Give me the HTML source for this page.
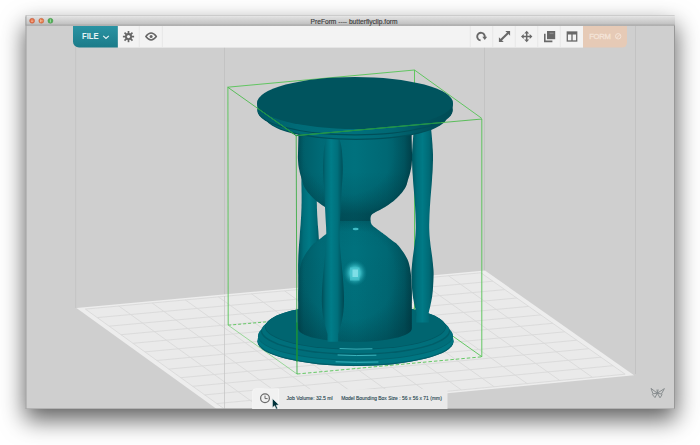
<!DOCTYPE html>
<html><head><meta charset="utf-8"><title>PreForm ---- butterflyclip.form</title>
<style>
html,body{margin:0;padding:0;background:#fff;}
body{width:700px;height:445px;overflow:hidden;position:relative;font-family:"Liberation Sans",sans-serif;}
#shadow{position:absolute;left:26px;top:16px;width:649px;height:393px;background:#cfcfcf;
 box-shadow:0 10px 22px 1px rgba(0,0,0,.62);}
svg{position:absolute;left:0;top:0;}
</style></head><body>
<div id="shadow"></div>
<svg width="700" height="445" viewBox="0 0 700 445">
<defs>
 <linearGradient id="tb" x1="0" y1="0" x2="0" y2="1"><stop offset="0" stop-color="#ececec"/><stop offset=".2" stop-color="#dedede"/><stop offset="1" stop-color="#bcbcbc"/></linearGradient>
 <linearGradient id="fileg" x1="0" y1="0" x2="0" y2="1"><stop offset="0" stop-color="#2a93a3"/><stop offset="1" stop-color="#1b7b89"/></linearGradient>
 <linearGradient id="bulbg" x1="0" y1="0" x2="1" y2="0"><stop offset="0" stop-color="#004e58"/><stop offset=".05" stop-color="#005f6a"/><stop offset=".2" stop-color="#006a76"/><stop offset=".5" stop-color="#00717d"/><stop offset=".78" stop-color="#006874"/><stop offset=".93" stop-color="#005a65"/><stop offset="1" stop-color="#004650"/></linearGradient>
 <linearGradient id="pilg" x1="0" y1="0" x2="1" y2="0"><stop offset="0" stop-color="#004f59"/><stop offset=".18" stop-color="#006b77"/><stop offset=".42" stop-color="#007d89"/><stop offset=".7" stop-color="#00707c"/><stop offset="1" stop-color="#004852"/></linearGradient>
 <linearGradient id="pilr" x1="0" y1="0" x2="1" y2="0"><stop offset="0" stop-color="#00545e"/><stop offset=".25" stop-color="#006f7b"/><stop offset=".5" stop-color="#007a86"/><stop offset=".8" stop-color="#006a76"/><stop offset="1" stop-color="#00505a"/></linearGradient>
 <linearGradient id="rimg" gradientUnits="userSpaceOnUse" x1="257" y1="0" x2="453" y2="0"><stop offset="0" stop-color="#005a65"/><stop offset=".2" stop-color="#006b77"/><stop offset=".5" stop-color="#00707c"/><stop offset=".68" stop-color="#006874"/><stop offset=".8" stop-color="#005a65"/><stop offset=".9" stop-color="#00505a"/><stop offset="1" stop-color="#004c56"/></linearGradient>
 <linearGradient id="vshade" gradientUnits="userSpaceOnUse" x1="0" y1="120" x2="0" y2="342"><stop offset="0.000" stop-color="#001a20" stop-opacity="0"/><stop offset="0.234" stop-color="#001a20" stop-opacity="0"/><stop offset="0.360" stop-color="#001a20" stop-opacity="0.12"/><stop offset="0.423" stop-color="#001a20" stop-opacity="0.24"/><stop offset="0.455" stop-color="#001a20" stop-opacity="0.14"/><stop offset="0.505" stop-color="#001a20" stop-opacity="0.02"/><stop offset="0.586" stop-color="#001a20" stop-opacity="0"/><stop offset="0.811" stop-color="#001a20" stop-opacity="0.03"/><stop offset="1.000" stop-color="#001a20" stop-opacity="0.08"/></linearGradient>
 <radialGradient id="bowlsh" gradientUnits="userSpaceOnUse" cx="349" cy="150" r="80"><stop offset="0" stop-color="#00262e" stop-opacity="0"/><stop offset=".55" stop-color="#00262e" stop-opacity="0"/><stop offset=".8" stop-color="#00262e" stop-opacity=".22"/><stop offset="1" stop-color="#00262e" stop-opacity=".55"/></radialGradient>
 <radialGradient id="domesh" gradientUnits="userSpaceOnUse" cx="350" cy="275" r="75"><stop offset="0" stop-color="#00262e" stop-opacity="0"/><stop offset=".6" stop-color="#00262e" stop-opacity="0"/><stop offset="1" stop-color="#00262e" stop-opacity=".3"/></radialGradient>
 <clipPath id="cbowl"><rect x="290" y="120" width="130" height="101"/></clipPath>
 <clipPath id="cdome"><rect x="290" y="221" width="130" height="125"/></clipPath>
 <radialGradient id="hl" cx=".5" cy=".5" r=".5"><stop offset="0" stop-color="#6fe0e6"/><stop offset=".45" stop-color="#3fc2cb" stop-opacity=".9"/><stop offset="1" stop-color="#0a8a96" stop-opacity="0"/></radialGradient>
 <clipPath id="win"><rect x="25.4" y="15.3" width="649.6" height="393.7"/></clipPath>
</defs>
<g clip-path="url(#win)">
 <rect x="25.4" y="15.3" width="649.6" height="393.7" fill="#cfcfcf"/>
 <!-- build volume -->
 <g stroke="#c0c0c0" stroke-width=".8" fill="none">
  <path d="M75.7 26V308M224.5 26V410M484.5 26V271M635.5 26V374"/>
 </g>
 <!-- platform -->
 <path d="M76.4,308.0L485.0,270.5L634.0,375.3L224.5,414.6Z" fill="#ededed"/>
 <path d="M85.4,309.1L480.9,272.8L625.1,374.2L228.8,412.2Z" fill="#eaeaea"/>
 <path d="M85.4,309.1L228.8,412.2M85.4,309.1L480.9,272.8M118.8,306.0L262.2,409.0M97.3,317.6L492.9,281.2M152.1,303.0L295.6,405.8M109.1,326.2L504.8,289.6M185.3,299.9L328.9,402.6M121.0,334.7L516.8,298.0M218.4,296.9L362.1,399.5M132.9,343.3L528.8,306.4M251.5,293.8L395.3,396.3M144.9,351.9L540.8,314.9M284.5,290.8L428.3,393.1M156.8,360.5L552.8,323.3M317.4,287.8L461.3,389.9M168.8,369.1L564.8,331.8M350.3,284.8L494.2,386.8M180.7,377.7L576.8,340.2M383.1,281.7L527.1,383.6M192.7,386.3L588.9,348.7M415.8,278.7L559.8,380.5M204.7,394.9L601.0,357.2M448.4,275.7L592.5,377.4M216.7,403.6L613.0,365.7M480.9,272.8L625.1,374.2M228.8,412.2L625.1,374.2" stroke="#d9d9d9" stroke-width=".9" fill="none"/>
 <path d="M224.5 296V410" stroke="#c6c6c6" stroke-width=".8"/>
 <!-- green box hidden/dashed -->
 <g stroke="#55c455" stroke-width=".9" fill="none">
  <path d="M228.2 325.2L414.5 309" stroke-dasharray="3 2"/>
  <path d="M482 356.8L414.5 309M414.5 70V309"/>
  <path d="M297 374L482 356.8" stroke-dasharray="3.5 2"/>
  <path d="M228.2 325.2L297 374" stroke="#8fd48f"/>
  <path d="M227.7 87.2L414.5 70L481.7 118.3"/>
  <path d="M227.9 87.2L228.2 325.2M481.8 119V356.8"/>
 </g>
 <!-- HOURGLASS -->
 <g id="hourglass">
  <path d="M317.2,150.0L317.2,155.1L317.1,160.4L317.1,165.6L317.1,170.7L317.0,175.6L317.0,180.0L317.0,184.0L316.9,187.6L316.9,190.9L316.8,194.1L316.8,197.1L316.8,200.0L316.8,202.7L316.9,205.2L316.9,207.5L317.0,209.8L317.1,212.3L317.2,215.0L317.4,218.0L317.6,221.3L317.8,224.7L318.1,228.1L318.4,231.6L318.6,235.0L318.8,238.3L319.1,241.7L319.4,245.0L319.6,248.3L319.8,251.7L320.0,255.0L320.1,258.3L320.2,261.7L320.3,265.0L320.3,268.3L320.3,271.7L320.2,275.0L320.1,278.3L319.9,281.7L319.6,285.0L319.3,288.3L319.0,291.7L318.7,295.0L318.3,298.4L317.9,302.0L317.4,305.6L317.0,309.1L316.5,312.2L316.2,315.0L315.9,317.2L315.8,319.1L315.6,320.6L315.5,322.0L315.3,323.4L315.2,325.0L303.2,325.0L303.1,323.4L302.9,322.0L302.8,320.6L302.6,319.1L302.5,317.2L302.2,315.0L301.9,312.2L301.4,309.1L301.0,305.6L300.5,302.0L300.1,298.4L299.7,295.0L299.4,291.7L299.1,288.3L298.8,285.0L298.5,281.7L298.3,278.3L298.2,275.0L298.1,271.7L298.1,268.3L298.1,265.0L298.2,261.7L298.3,258.3L298.4,255.0L298.6,251.7L298.8,248.3L299.0,245.0L299.3,241.7L299.6,238.3L299.8,235.0L300.0,231.6L300.3,228.1L300.6,224.7L300.8,221.3L301.0,218.0L301.2,215.0L301.3,212.3L301.4,209.8L301.5,207.5L301.5,205.2L301.6,202.7L301.6,200.0L301.6,197.1L301.6,194.1L301.5,190.9L301.5,187.6L301.4,184.0L301.4,180.0L301.4,175.6L301.3,170.7L301.3,165.6L301.3,160.4L301.2,155.1L301.2,150.0Z" fill="url(#pilr)"/>
  <!-- base -->
  <path d="M265.5 326.5A90 22.5 0 0 1 445.5 326.5L453.5 341.5A98 24.5 0 0 1 257.5 341.5Z" fill="#006470"/>
  <ellipse cx="355.5" cy="341.5" rx="98" ry="24.5" fill="#005f6a"/>
  <ellipse cx="355.5" cy="340.3" rx="98" ry="24.5" fill="#007682"/>
  <ellipse cx="355.5" cy="336.3" rx="97.5" ry="24.3" fill="#00636e"/>
  <ellipse cx="355.5" cy="335.5" rx="97.3" ry="24.2" fill="#006e7a"/>
  <ellipse cx="355.5" cy="331.3" rx="94.5" ry="23.6" fill="#005e69"/>
  <ellipse cx="355.5" cy="330.2" rx="93.5" ry="23.3" fill="#006f7b"/>
  <ellipse cx="355.5" cy="327.2" rx="90.5" ry="22.6" fill="#005a65"/>
  <ellipse cx="355.5" cy="326.5" rx="90" ry="22.5" fill="#006570"/>
  <g stroke="#49c6ce" stroke-width="1" stroke-linecap="round" fill="none" opacity=".8">
   <path d="M340 348.6Q356 349.6 372 348.8M338 355Q356 356 376 355.2M336 361.8Q356 362.8 378 362"/>
  </g>
  <!-- body -->
  <path d="M411.5,120.0L411.5,123.0L411.5,125.9L411.5,128.8L411.5,131.7L411.6,134.8L411.6,138.0L411.7,141.6L411.8,145.4L411.9,149.4L412.0,153.3L412.1,156.9L412.0,160.0L411.8,162.6L411.6,164.9L411.3,166.9L411.0,168.7L410.6,170.3L410.3,172.0L409.9,173.6L409.5,175.0L409.1,176.3L408.7,177.6L408.3,178.8L407.9,180.0L407.6,181.2L407.3,182.3L407.0,183.4L406.7,184.5L406.3,185.6L405.8,186.7L405.2,187.8L404.5,189.0L403.7,190.1L402.9,191.2L402.0,192.4L401.1,193.5L400.1,194.6L399.1,195.7L398.0,196.8L396.9,198.0L395.7,199.1L394.4,200.2L393.0,201.4L391.4,202.6L389.8,203.8L388.1,204.9L386.5,206.0L385.0,207.0L383.6,207.8L382.3,208.6L381.0,209.3L379.7,209.9L378.6,210.4L377.5,211.0L376.5,211.5L375.6,212.0L374.8,212.5L374.1,212.9L373.4,213.3L372.8,213.7L372.3,214.1L371.9,214.5L371.6,214.8L371.3,215.2L371.1,215.6L370.9,216.0L370.7,216.5L370.6,216.9L370.5,217.4L370.4,218.0L370.4,218.5L370.4,219.1L370.4,219.7L370.5,220.4L370.6,221.1L370.7,221.8L370.8,222.4L371.0,223.0L371.2,223.5L371.4,224.0L371.6,224.4L371.9,224.8L372.3,225.3L372.8,225.8L373.5,226.4L374.3,227.1L375.3,227.8L376.3,228.5L377.3,229.2L378.2,229.9L379.1,230.5L379.9,231.2L380.7,231.8L381.6,232.4L382.6,233.1L383.6,233.9L384.8,234.8L386.1,235.8L387.4,236.8L388.8,237.9L390.2,239.0L391.5,240.0L392.7,240.9L393.8,241.7L394.9,242.4L396.1,243.3L397.2,244.4L398.5,245.8L399.9,247.6L401.5,249.7L403.2,252.1L404.8,254.5L406.2,257.0L407.4,259.3L408.3,261.5L409.0,263.7L409.5,265.9L410.0,268.1L410.3,270.4L410.7,272.8L411.0,275.3L411.3,277.8L411.5,280.4L411.6,283.1L411.7,286.0L411.8,289.0L411.9,292.3L411.9,295.7L411.9,299.4L411.8,303.0L411.8,306.6L411.8,310.0L411.8,313.2L411.8,316.4L411.8,319.4L411.8,322.4L411.8,325.4L411.8,328.5A56.8 13.5 0 0 1 298.2,328.5L298.2,328.5L298.2,325.4L298.2,322.4L298.2,319.4L298.2,316.4L298.2,313.2L298.2,310.0L298.2,306.6L298.2,303.0L298.1,299.4L298.1,295.7L298.1,292.3L298.2,289.0L298.3,286.0L298.4,283.1L298.5,280.4L298.7,277.8L299.0,275.3L299.3,272.8L299.7,270.4L300.0,268.1L300.5,265.9L301.0,263.7L301.7,261.5L302.6,259.3L303.8,257.0L305.2,254.5L306.8,252.1L308.5,249.7L310.1,247.6L311.5,245.8L312.8,244.4L313.9,243.3L315.1,242.4L316.2,241.7L317.3,240.9L318.5,240.0L319.8,239.0L321.2,237.9L322.6,236.8L323.9,235.8L325.2,234.8L326.4,233.9L327.4,233.1L328.4,232.4L329.3,231.8L330.1,231.2L330.9,230.5L331.8,229.9L332.7,229.2L333.7,228.5L334.7,227.8L335.7,227.1L336.5,226.4L337.2,225.8L337.7,225.3L338.1,224.8L338.4,224.4L338.6,224.0L338.8,223.5L339.0,223.0L339.2,222.4L339.3,221.8L339.4,221.1L339.5,220.4L339.6,219.7L339.6,219.1L339.6,218.5L339.6,218.0L339.5,217.4L339.4,216.9L339.3,216.5L339.1,216.0L338.9,215.6L338.7,215.2L338.4,214.8L338.1,214.5L337.7,214.1L337.2,213.7L336.6,213.3L335.9,212.9L335.2,212.5L334.4,212.0L333.5,211.5L332.5,211.0L331.4,210.4L330.3,209.9L329.0,209.3L327.7,208.6L326.4,207.8L325.0,207.0L323.5,206.0L321.9,204.9L320.2,203.8L318.6,202.6L317.0,201.4L315.6,200.2L314.3,199.1L313.1,198.0L312.0,196.8L310.9,195.7L309.9,194.6L308.9,193.5L308.0,192.4L307.1,191.2L306.3,190.1L305.5,189.0L304.8,187.8L304.2,186.7L303.7,185.6L303.3,184.5L303.0,183.4L302.7,182.3L302.4,181.2L302.1,180.0L301.7,178.8L301.3,177.6L300.9,176.3L300.5,175.0L300.1,173.6L299.7,172.0L299.4,170.3L299.0,168.7L298.7,166.9L298.4,164.9L298.2,162.6L298.0,160.0L297.9,156.9L298.0,153.3L298.1,149.4L298.2,145.4L298.3,141.6L298.4,138.0L298.4,134.8L298.5,131.7L298.5,128.8L298.5,125.9L298.5,123.0L298.5,120.0Z" fill="url(#bulbg)"/>
  <path d="M411.5,120.0L411.5,123.0L411.5,125.9L411.5,128.8L411.5,131.7L411.6,134.8L411.6,138.0L411.7,141.6L411.8,145.4L411.9,149.4L412.0,153.3L412.1,156.9L412.0,160.0L411.8,162.6L411.6,164.9L411.3,166.9L411.0,168.7L410.6,170.3L410.3,172.0L409.9,173.6L409.5,175.0L409.1,176.3L408.7,177.6L408.3,178.8L407.9,180.0L407.6,181.2L407.3,182.3L407.0,183.4L406.7,184.5L406.3,185.6L405.8,186.7L405.2,187.8L404.5,189.0L403.7,190.1L402.9,191.2L402.0,192.4L401.1,193.5L400.1,194.6L399.1,195.7L398.0,196.8L396.9,198.0L395.7,199.1L394.4,200.2L393.0,201.4L391.4,202.6L389.8,203.8L388.1,204.9L386.5,206.0L385.0,207.0L383.6,207.8L382.3,208.6L381.0,209.3L379.7,209.9L378.6,210.4L377.5,211.0L376.5,211.5L375.6,212.0L374.8,212.5L374.1,212.9L373.4,213.3L372.8,213.7L372.3,214.1L371.9,214.5L371.6,214.8L371.3,215.2L371.1,215.6L370.9,216.0L370.7,216.5L370.6,216.9L370.5,217.4L370.4,218.0L370.4,218.5L370.4,219.1L370.4,219.7L370.5,220.4L370.6,221.1L370.7,221.8L370.8,222.4L371.0,223.0L371.2,223.5L371.4,224.0L371.6,224.4L371.9,224.8L372.3,225.3L372.8,225.8L373.5,226.4L374.3,227.1L375.3,227.8L376.3,228.5L377.3,229.2L378.2,229.9L379.1,230.5L379.9,231.2L380.7,231.8L381.6,232.4L382.6,233.1L383.6,233.9L384.8,234.8L386.1,235.8L387.4,236.8L388.8,237.9L390.2,239.0L391.5,240.0L392.7,240.9L393.8,241.7L394.9,242.4L396.1,243.3L397.2,244.4L398.5,245.8L399.9,247.6L401.5,249.7L403.2,252.1L404.8,254.5L406.2,257.0L407.4,259.3L408.3,261.5L409.0,263.7L409.5,265.9L410.0,268.1L410.3,270.4L410.7,272.8L411.0,275.3L411.3,277.8L411.5,280.4L411.6,283.1L411.7,286.0L411.8,289.0L411.9,292.3L411.9,295.7L411.9,299.4L411.8,303.0L411.8,306.6L411.8,310.0L411.8,313.2L411.8,316.4L411.8,319.4L411.8,322.4L411.8,325.4L411.8,328.5A56.8 13.5 0 0 1 298.2,328.5L298.2,328.5L298.2,325.4L298.2,322.4L298.2,319.4L298.2,316.4L298.2,313.2L298.2,310.0L298.2,306.6L298.2,303.0L298.1,299.4L298.1,295.7L298.1,292.3L298.2,289.0L298.3,286.0L298.4,283.1L298.5,280.4L298.7,277.8L299.0,275.3L299.3,272.8L299.7,270.4L300.0,268.1L300.5,265.9L301.0,263.7L301.7,261.5L302.6,259.3L303.8,257.0L305.2,254.5L306.8,252.1L308.5,249.7L310.1,247.6L311.5,245.8L312.8,244.4L313.9,243.3L315.1,242.4L316.2,241.7L317.3,240.9L318.5,240.0L319.8,239.0L321.2,237.9L322.6,236.8L323.9,235.8L325.2,234.8L326.4,233.9L327.4,233.1L328.4,232.4L329.3,231.8L330.1,231.2L330.9,230.5L331.8,229.9L332.7,229.2L333.7,228.5L334.7,227.8L335.7,227.1L336.5,226.4L337.2,225.8L337.7,225.3L338.1,224.8L338.4,224.4L338.6,224.0L338.8,223.5L339.0,223.0L339.2,222.4L339.3,221.8L339.4,221.1L339.5,220.4L339.6,219.7L339.6,219.1L339.6,218.5L339.6,218.0L339.5,217.4L339.4,216.9L339.3,216.5L339.1,216.0L338.9,215.6L338.7,215.2L338.4,214.8L338.1,214.5L337.7,214.1L337.2,213.7L336.6,213.3L335.9,212.9L335.2,212.5L334.4,212.0L333.5,211.5L332.5,211.0L331.4,210.4L330.3,209.9L329.0,209.3L327.7,208.6L326.4,207.8L325.0,207.0L323.5,206.0L321.9,204.9L320.2,203.8L318.6,202.6L317.0,201.4L315.6,200.2L314.3,199.1L313.1,198.0L312.0,196.8L310.9,195.7L309.9,194.6L308.9,193.5L308.0,192.4L307.1,191.2L306.3,190.1L305.5,189.0L304.8,187.8L304.2,186.7L303.7,185.6L303.3,184.5L303.0,183.4L302.7,182.3L302.4,181.2L302.1,180.0L301.7,178.8L301.3,177.6L300.9,176.3L300.5,175.0L300.1,173.6L299.7,172.0L299.4,170.3L299.0,168.7L298.7,166.9L298.4,164.9L298.2,162.6L298.0,160.0L297.9,156.9L298.0,153.3L298.1,149.4L298.2,145.4L298.3,141.6L298.4,138.0L298.4,134.8L298.5,131.7L298.5,128.8L298.5,125.9L298.5,123.0L298.5,120.0Z" fill="url(#vshade)"/>
  <path d="M411.5,120.0L411.5,123.0L411.5,125.9L411.5,128.8L411.5,131.7L411.6,134.8L411.6,138.0L411.7,141.6L411.8,145.4L411.9,149.4L412.0,153.3L412.1,156.9L412.0,160.0L411.8,162.6L411.6,164.9L411.3,166.9L411.0,168.7L410.6,170.3L410.3,172.0L409.9,173.6L409.5,175.0L409.1,176.3L408.7,177.6L408.3,178.8L407.9,180.0L407.6,181.2L407.3,182.3L407.0,183.4L406.7,184.5L406.3,185.6L405.8,186.7L405.2,187.8L404.5,189.0L403.7,190.1L402.9,191.2L402.0,192.4L401.1,193.5L400.1,194.6L399.1,195.7L398.0,196.8L396.9,198.0L395.7,199.1L394.4,200.2L393.0,201.4L391.4,202.6L389.8,203.8L388.1,204.9L386.5,206.0L385.0,207.0L383.6,207.8L382.3,208.6L381.0,209.3L379.7,209.9L378.6,210.4L377.5,211.0L376.5,211.5L375.6,212.0L374.8,212.5L374.1,212.9L373.4,213.3L372.8,213.7L372.3,214.1L371.9,214.5L371.6,214.8L371.3,215.2L371.1,215.6L370.9,216.0L370.7,216.5L370.6,216.9L370.5,217.4L370.4,218.0L370.4,218.5L370.4,219.1L370.4,219.7L370.5,220.4L370.6,221.1L370.7,221.8L370.8,222.4L371.0,223.0L371.2,223.5L371.4,224.0L371.6,224.4L371.9,224.8L372.3,225.3L372.8,225.8L373.5,226.4L374.3,227.1L375.3,227.8L376.3,228.5L377.3,229.2L378.2,229.9L379.1,230.5L379.9,231.2L380.7,231.8L381.6,232.4L382.6,233.1L383.6,233.9L384.8,234.8L386.1,235.8L387.4,236.8L388.8,237.9L390.2,239.0L391.5,240.0L392.7,240.9L393.8,241.7L394.9,242.4L396.1,243.3L397.2,244.4L398.5,245.8L399.9,247.6L401.5,249.7L403.2,252.1L404.8,254.5L406.2,257.0L407.4,259.3L408.3,261.5L409.0,263.7L409.5,265.9L410.0,268.1L410.3,270.4L410.7,272.8L411.0,275.3L411.3,277.8L411.5,280.4L411.6,283.1L411.7,286.0L411.8,289.0L411.9,292.3L411.9,295.7L411.9,299.4L411.8,303.0L411.8,306.6L411.8,310.0L411.8,313.2L411.8,316.4L411.8,319.4L411.8,322.4L411.8,325.4L411.8,328.5A56.8 13.5 0 0 1 298.2,328.5L298.2,328.5L298.2,325.4L298.2,322.4L298.2,319.4L298.2,316.4L298.2,313.2L298.2,310.0L298.2,306.6L298.2,303.0L298.1,299.4L298.1,295.7L298.1,292.3L298.2,289.0L298.3,286.0L298.4,283.1L298.5,280.4L298.7,277.8L299.0,275.3L299.3,272.8L299.7,270.4L300.0,268.1L300.5,265.9L301.0,263.7L301.7,261.5L302.6,259.3L303.8,257.0L305.2,254.5L306.8,252.1L308.5,249.7L310.1,247.6L311.5,245.8L312.8,244.4L313.9,243.3L315.1,242.4L316.2,241.7L317.3,240.9L318.5,240.0L319.8,239.0L321.2,237.9L322.6,236.8L323.9,235.8L325.2,234.8L326.4,233.9L327.4,233.1L328.4,232.4L329.3,231.8L330.1,231.2L330.9,230.5L331.8,229.9L332.7,229.2L333.7,228.5L334.7,227.8L335.7,227.1L336.5,226.4L337.2,225.8L337.7,225.3L338.1,224.8L338.4,224.4L338.6,224.0L338.8,223.5L339.0,223.0L339.2,222.4L339.3,221.8L339.4,221.1L339.5,220.4L339.6,219.7L339.6,219.1L339.6,218.5L339.6,218.0L339.5,217.4L339.4,216.9L339.3,216.5L339.1,216.0L338.9,215.6L338.7,215.2L338.4,214.8L338.1,214.5L337.7,214.1L337.2,213.7L336.6,213.3L335.9,212.9L335.2,212.5L334.4,212.0L333.5,211.5L332.5,211.0L331.4,210.4L330.3,209.9L329.0,209.3L327.7,208.6L326.4,207.8L325.0,207.0L323.5,206.0L321.9,204.9L320.2,203.8L318.6,202.6L317.0,201.4L315.6,200.2L314.3,199.1L313.1,198.0L312.0,196.8L310.9,195.7L309.9,194.6L308.9,193.5L308.0,192.4L307.1,191.2L306.3,190.1L305.5,189.0L304.8,187.8L304.2,186.7L303.7,185.6L303.3,184.5L303.0,183.4L302.7,182.3L302.4,181.2L302.1,180.0L301.7,178.8L301.3,177.6L300.9,176.3L300.5,175.0L300.1,173.6L299.7,172.0L299.4,170.3L299.0,168.7L298.7,166.9L298.4,164.9L298.2,162.6L298.0,160.0L297.9,156.9L298.0,153.3L298.1,149.4L298.2,145.4L298.3,141.6L298.4,138.0L298.4,134.8L298.5,131.7L298.5,128.8L298.5,125.9L298.5,123.0L298.5,120.0Z" fill="url(#bowlsh)" clip-path="url(#cbowl)"/>
  <path d="M411.5,120.0L411.5,123.0L411.5,125.9L411.5,128.8L411.5,131.7L411.6,134.8L411.6,138.0L411.7,141.6L411.8,145.4L411.9,149.4L412.0,153.3L412.1,156.9L412.0,160.0L411.8,162.6L411.6,164.9L411.3,166.9L411.0,168.7L410.6,170.3L410.3,172.0L409.9,173.6L409.5,175.0L409.1,176.3L408.7,177.6L408.3,178.8L407.9,180.0L407.6,181.2L407.3,182.3L407.0,183.4L406.7,184.5L406.3,185.6L405.8,186.7L405.2,187.8L404.5,189.0L403.7,190.1L402.9,191.2L402.0,192.4L401.1,193.5L400.1,194.6L399.1,195.7L398.0,196.8L396.9,198.0L395.7,199.1L394.4,200.2L393.0,201.4L391.4,202.6L389.8,203.8L388.1,204.9L386.5,206.0L385.0,207.0L383.6,207.8L382.3,208.6L381.0,209.3L379.7,209.9L378.6,210.4L377.5,211.0L376.5,211.5L375.6,212.0L374.8,212.5L374.1,212.9L373.4,213.3L372.8,213.7L372.3,214.1L371.9,214.5L371.6,214.8L371.3,215.2L371.1,215.6L370.9,216.0L370.7,216.5L370.6,216.9L370.5,217.4L370.4,218.0L370.4,218.5L370.4,219.1L370.4,219.7L370.5,220.4L370.6,221.1L370.7,221.8L370.8,222.4L371.0,223.0L371.2,223.5L371.4,224.0L371.6,224.4L371.9,224.8L372.3,225.3L372.8,225.8L373.5,226.4L374.3,227.1L375.3,227.8L376.3,228.5L377.3,229.2L378.2,229.9L379.1,230.5L379.9,231.2L380.7,231.8L381.6,232.4L382.6,233.1L383.6,233.9L384.8,234.8L386.1,235.8L387.4,236.8L388.8,237.9L390.2,239.0L391.5,240.0L392.7,240.9L393.8,241.7L394.9,242.4L396.1,243.3L397.2,244.4L398.5,245.8L399.9,247.6L401.5,249.7L403.2,252.1L404.8,254.5L406.2,257.0L407.4,259.3L408.3,261.5L409.0,263.7L409.5,265.9L410.0,268.1L410.3,270.4L410.7,272.8L411.0,275.3L411.3,277.8L411.5,280.4L411.6,283.1L411.7,286.0L411.8,289.0L411.9,292.3L411.9,295.7L411.9,299.4L411.8,303.0L411.8,306.6L411.8,310.0L411.8,313.2L411.8,316.4L411.8,319.4L411.8,322.4L411.8,325.4L411.8,328.5A56.8 13.5 0 0 1 298.2,328.5L298.2,328.5L298.2,325.4L298.2,322.4L298.2,319.4L298.2,316.4L298.2,313.2L298.2,310.0L298.2,306.6L298.2,303.0L298.1,299.4L298.1,295.7L298.1,292.3L298.2,289.0L298.3,286.0L298.4,283.1L298.5,280.4L298.7,277.8L299.0,275.3L299.3,272.8L299.7,270.4L300.0,268.1L300.5,265.9L301.0,263.7L301.7,261.5L302.6,259.3L303.8,257.0L305.2,254.5L306.8,252.1L308.5,249.7L310.1,247.6L311.5,245.8L312.8,244.4L313.9,243.3L315.1,242.4L316.2,241.7L317.3,240.9L318.5,240.0L319.8,239.0L321.2,237.9L322.6,236.8L323.9,235.8L325.2,234.8L326.4,233.9L327.4,233.1L328.4,232.4L329.3,231.8L330.1,231.2L330.9,230.5L331.8,229.9L332.7,229.2L333.7,228.5L334.7,227.8L335.7,227.1L336.5,226.4L337.2,225.8L337.7,225.3L338.1,224.8L338.4,224.4L338.6,224.0L338.8,223.5L339.0,223.0L339.2,222.4L339.3,221.8L339.4,221.1L339.5,220.4L339.6,219.7L339.6,219.1L339.6,218.5L339.6,218.0L339.5,217.4L339.4,216.9L339.3,216.5L339.1,216.0L338.9,215.6L338.7,215.2L338.4,214.8L338.1,214.5L337.7,214.1L337.2,213.7L336.6,213.3L335.9,212.9L335.2,212.5L334.4,212.0L333.5,211.5L332.5,211.0L331.4,210.4L330.3,209.9L329.0,209.3L327.7,208.6L326.4,207.8L325.0,207.0L323.5,206.0L321.9,204.9L320.2,203.8L318.6,202.6L317.0,201.4L315.6,200.2L314.3,199.1L313.1,198.0L312.0,196.8L310.9,195.7L309.9,194.6L308.9,193.5L308.0,192.4L307.1,191.2L306.3,190.1L305.5,189.0L304.8,187.8L304.2,186.7L303.7,185.6L303.3,184.5L303.0,183.4L302.7,182.3L302.4,181.2L302.1,180.0L301.7,178.8L301.3,177.6L300.9,176.3L300.5,175.0L300.1,173.6L299.7,172.0L299.4,170.3L299.0,168.7L298.7,166.9L298.4,164.9L298.2,162.6L298.0,160.0L297.9,156.9L298.0,153.3L298.1,149.4L298.2,145.4L298.3,141.6L298.4,138.0L298.4,134.8L298.5,131.7L298.5,128.8L298.5,125.9L298.5,123.0L298.5,120.0Z" fill="url(#domesh)" clip-path="url(#cdome)"/>
  <rect x="343" y="260" width="24" height="26" fill="url(#hl)"/>
  <rect x="350" y="267.5" width="9.5" height="13" fill="#4cc6d0" opacity=".7"/><rect x="352.5" y="269.5" width="5.5" height="7.5" fill="#86e2ea" opacity=".85"/>
  <ellipse cx="355.7" cy="229" rx="3" ry="1.3" fill="#4fd0d8" opacity=".8"/>
  <path d="M431.0,125.0L431.0,125.9L431.1,126.7L431.1,127.5L431.1,128.4L431.2,129.5L431.3,131.0L431.5,132.9L431.7,135.0L431.9,137.4L432.1,140.0L432.3,142.5L432.5,145.0L432.6,147.4L432.8,149.7L432.9,152.1L433.0,154.6L433.0,157.2L433.0,160.0L432.9,163.0L432.8,166.0L432.7,169.2L432.5,172.6L432.2,176.2L432.0,180.0L431.7,184.2L431.3,188.7L430.9,193.4L430.5,198.2L430.2,202.8L429.9,207.0L429.7,210.9L429.5,214.7L429.4,218.3L429.3,221.7L429.2,225.0L429.2,228.0L429.3,230.7L429.4,233.0L429.5,235.1L429.7,237.2L429.9,239.5L430.2,242.0L430.5,244.9L430.9,248.1L431.4,251.5L431.9,254.9L432.3,258.1L432.6,261.0L432.9,263.6L433.1,265.9L433.3,268.0L433.5,270.2L433.6,272.5L433.6,275.0L433.5,277.9L433.4,281.1L433.2,284.4L433.0,287.7L432.8,290.8L432.5,293.5L432.2,295.9L431.9,298.0L431.5,300.0L431.2,301.8L430.8,303.4L430.5,305.0L430.2,306.5L429.9,307.8L429.6,309.0L429.3,310.1L429.1,311.1L428.9,312.0L428.7,312.8L428.6,313.5L428.5,314.2L428.5,314.7L428.4,315.1L428.4,315.5L428.4,315.7L428.5,315.7L428.6,315.6L428.7,315.5L428.8,315.6L428.9,316.0L428.9,316.7L428.9,317.7L428.9,318.9L428.9,320.1L428.9,321.3L428.9,322.5L416.1,322.5L416.1,321.3L416.1,320.1L416.1,318.9L416.1,317.7L416.1,316.7L416.1,316.0L416.2,315.6L416.3,315.5L416.4,315.6L416.5,315.7L416.6,315.7L416.6,315.5L416.6,315.1L416.5,314.7L416.5,314.2L416.4,313.5L416.3,312.8L416.1,312.0L415.9,311.1L415.7,310.1L415.4,309.0L415.1,307.8L414.8,306.5L414.5,305.0L414.2,303.4L413.8,301.8L413.5,300.0L413.1,298.0L412.8,295.9L412.5,293.5L412.2,290.8L412.0,287.7L411.8,284.4L411.6,281.1L411.5,277.9L411.4,275.0L411.4,272.5L411.5,270.2L411.7,268.0L411.9,265.9L412.1,263.6L412.4,261.0L412.7,258.1L413.1,254.9L413.6,251.5L414.1,248.1L414.5,244.9L414.8,242.0L415.1,239.5L415.3,237.2L415.5,235.1L415.6,233.0L415.7,230.7L415.8,228.0L415.8,225.0L415.7,221.7L415.6,218.3L415.5,214.7L415.3,210.9L415.1,207.0L414.8,202.8L414.5,198.2L414.1,193.4L413.7,188.7L413.3,184.2L413.0,180.0L412.8,176.2L412.5,172.6L412.3,169.2L412.2,166.0L412.1,163.0L412.0,160.0L412.0,157.2L412.0,154.6L412.1,152.1L412.2,149.7L412.4,147.4L412.5,145.0L412.7,142.5L412.9,140.0L413.1,137.4L413.3,135.0L413.5,132.9L413.7,131.0L413.8,129.5L413.9,128.4L413.9,127.5L413.9,126.7L414.0,125.9L414.0,125.0Z" fill="url(#pilr)"/>
  <path d="M336.9,130.0L337.2,131.4L337.4,132.9L337.7,134.4L338.0,135.8L338.3,137.0L338.5,138.0L338.7,138.6L338.9,138.9L339.1,139.1L339.3,139.2L339.5,139.4L339.7,140.0L340.0,140.9L340.3,141.9L340.6,143.1L340.9,144.4L341.2,145.7L341.4,147.0L341.6,148.2L341.7,149.3L341.9,150.5L342.0,151.8L342.1,153.2L342.2,155.0L342.3,157.0L342.5,159.2L342.6,161.6L342.7,164.2L342.8,167.0L342.8,170.0L342.7,173.2L342.5,176.7L342.3,180.4L342.0,184.2L341.7,188.1L341.5,192.0L341.3,196.1L341.1,200.3L340.9,204.6L340.7,208.9L340.5,213.1L340.3,217.0L340.1,220.6L339.9,223.9L339.7,227.1L339.6,230.3L339.5,233.6L339.5,237.0L339.6,240.6L339.9,244.4L340.2,248.2L340.5,252.1L340.9,256.0L341.2,260.0L341.6,264.1L342.0,268.2L342.4,272.5L342.8,276.6L343.1,280.7L343.4,284.5L343.6,288.1L343.8,291.5L343.9,294.8L344.0,298.0L344.0,301.1L343.9,304.0L343.8,306.8L343.5,309.4L343.3,311.9L343.0,314.4L342.6,316.7L342.2,319.0L341.7,321.3L341.2,323.7L340.6,326.0L340.0,328.2L339.5,330.0L339.1,331.5L338.8,332.5L338.6,333.1L338.5,333.5L338.4,333.7L338.4,333.8L338.3,334.0L338.3,334.1L338.2,334.1L338.2,333.9L338.3,333.9L338.3,334.0L338.3,334.5L338.3,335.3L338.3,336.4L338.3,337.7L338.3,339.1L338.3,340.5L338.3,341.8L327.5,341.8L327.5,340.5L327.5,339.1L327.5,337.7L327.5,336.4L327.5,335.3L327.5,334.5L327.5,334.0L327.5,333.9L327.5,333.9L327.6,334.1L327.5,334.1L327.5,334.0L327.4,333.8L327.4,333.7L327.3,333.5L327.2,333.1L327.0,332.5L326.7,331.5L326.3,330.0L325.8,328.2L325.2,326.0L324.6,323.7L324.1,321.3L323.6,319.0L323.2,316.7L322.8,314.4L322.5,311.9L322.3,309.4L322.0,306.8L321.9,304.0L321.8,301.1L321.8,298.0L321.9,294.8L322.0,291.5L322.2,288.1L322.4,284.5L322.7,280.7L323.0,276.6L323.4,272.5L323.8,268.2L324.2,264.1L324.6,260.0L324.9,256.0L325.3,252.1L325.6,248.2L325.9,244.4L326.2,240.6L326.3,237.0L326.3,233.6L326.2,230.3L326.1,227.1L325.9,223.9L325.7,220.6L325.5,217.0L325.3,213.1L325.1,208.9L324.9,204.6L324.7,200.3L324.5,196.1L324.3,192.0L324.1,188.1L323.8,184.2L323.5,180.4L323.3,176.7L323.1,173.2L323.0,170.0L323.0,167.0L323.1,164.2L323.2,161.6L323.3,159.2L323.5,157.0L323.6,155.0L323.7,153.2L323.8,151.8L323.9,150.5L324.1,149.3L324.2,148.2L324.4,147.0L324.6,145.7L324.9,144.4L325.2,143.1L325.5,141.9L325.8,140.9L326.1,140.0L326.3,139.4L326.5,139.2L326.7,139.1L326.9,138.9L327.1,138.6L327.3,138.0L327.5,137.0L327.8,135.8L328.1,134.4L328.4,132.9L328.6,131.4L328.9,130.0Z" fill="url(#pilg)"/>
  <!-- top moulding + rim + face -->
  <ellipse cx="356" cy="116.7" rx="91" ry="23.3" fill="#00505a"/>
  <ellipse cx="356" cy="115.5" rx="91" ry="23.3" fill="url(#rimg)"/>
  <path d="M257 103L257.5 110.5A97.5 24.5 0 0 0 452.5 110.5L453 103Z" fill="url(#rimg)"/>
  <ellipse cx="355" cy="111" rx="97.5" ry="24.5" fill="#004f59"/>
  <ellipse cx="355" cy="109.8" rx="97.5" ry="24.5" fill="url(#rimg)"/>
  <ellipse cx="355" cy="103" rx="98" ry="26" fill="#00545e"/>
 </g>
 <!-- green box visible front lines -->
 <g stroke="#4dbb4d" stroke-width=".9" fill="none">
  <path d="M227.7 87.2L296.2 135.6L482 119"/>
  <path d="M296.2 135.6L297 374" stroke="#3fae48"/>
  <path d="M296.9 322.5L297 361.5" stroke="#118a3a" stroke-width="1.4"/>
  <path d="M296.2 135.6L441 122.6M258 108.6L296.2 135.6" stroke="#168f45" stroke-width=".9"/>
 </g>

 <!-- window edges -->
 <path d="M25.9 17V409" stroke="#8c8c8c" stroke-width=".9"/><path d="M674.5 17V409" stroke="#989898" stroke-width="1"/><path d="M25.5 408.6H675" stroke="#a6a6a6" stroke-width=".8"/>
 <!-- title bar -->
 <rect x="25.5" y="15.3" width="649.6" height="10.2" fill="url(#tb)"/>
 <rect x="25.5" y="24.7" width="649" height=".8" fill="#9c9c9c"/><rect x="25.5" y="15.3" width="649" height=".6" fill="#b4b4b4"/><rect x="25.4" y="15.5" width="1" height="10" fill="#9a9a9a"/>
 <circle cx="32.1" cy="20.8" r="2.5" fill="#e5693f" stroke="#b9634a" stroke-width=".5"/><path d="M30.9 20.2H33.3M30.9 21.6H33.3" stroke="#f3c3a8" stroke-width=".7"/>
 <circle cx="41.3" cy="20.8" r="2.5" fill="#e67643" stroke="#b9694a" stroke-width=".5"/><path d="M40.6 19.4V22.2M41.9 20V21.6" stroke="#f5cdb0" stroke-width=".8"/>
 <circle cx="50.4" cy="20.8" r="2.5" fill="#50b156" stroke="#4a8f4e" stroke-width=".5"/><path d="M50.4 19.3V22.4" stroke="#a6dca8" stroke-width=".9"/>
 <text x="310.6" y="23.5" font-family="Liberation Sans, sans-serif" font-size="6.6" fill="#3c3c3c" stroke="#3c3c3c" stroke-width=".15" textLength="87" lengthAdjust="spacingAndGlyphs">PreForm ---- butterflyclip.form</text>

 <!-- toolbar -->
 <rect x="117.8" y="26" width="465.2" height="21.6" fill="#f3f3f3"/>
 <g stroke="#e4e4e4" stroke-width=".8"><path d="M139.3 26V47.6M162.4 26V47.6M470.3 26V47.6M492.7 26V47.6M515.3 26V47.6M537.7 26V47.6M560.3 26V47.6"/></g>
 <path d="M73 26H117.8V47.6H79A6 6 0 0 1 73 41.6Z" fill="url(#fileg)"/>
 <text x="82" y="39.4" font-family="Liberation Sans, sans-serif" font-size="8.2" font-weight="bold" fill="#e6f3f5" textLength="16.6" lengthAdjust="spacingAndGlyphs">FILE</text>
 <path d="M103.2 35.9L106 38.5L108.8 35.9" stroke="#e6f3f5" stroke-width="1.2" fill="none"/>
 <path d="M583 26H627V42.6A5 5 0 0 1 622 47.6H583Z" fill="#e6cab6"/>
 <text x="589.2" y="39.1" font-family="Liberation Sans, sans-serif" font-size="7.7" fill="#f4e4d8" stroke="#f4e4d8" stroke-width=".3" textLength="21.7" lengthAdjust="spacing">FORM</text>
 <g stroke="#f4e4d8" stroke-width="1" fill="none"><circle cx="618.2" cy="36.3" r="2.7"/><path d="M616.4 38.2L620 34.4"/></g>

 <!-- gear -->
 <g transform="translate(128.5 36.6)" fill="#666">
  <rect x="-.85" y="-5.6" width="1.7" height="11.2"/><rect x="-.85" y="-5.6" width="1.7" height="11.2" transform="rotate(45)"/><rect x="-.85" y="-5.6" width="1.7" height="11.2" transform="rotate(90)"/><rect x="-.85" y="-5.6" width="1.7" height="11.2" transform="rotate(135)"/>
  <circle r="3.5"/><circle r="1.6" fill="#f3f3f3"/>
 </g>
 <!-- eye -->
 <g transform="translate(151.1 36.5)">
  <path d="M-5.3 0Q0 -6.8 5.3 0Q0 6.8 -5.3 0Z" fill="#f3f3f3" stroke="#666" stroke-width="1.5" stroke-linejoin="round"/>
  <circle r="1.5" fill="#666"/>
 </g>
 <!-- rotate -->
 <g transform="translate(481 36.6)" fill="none" stroke="#686868" stroke-width="1.9">
  <path d="M-0.4 3.8A3.8 3.8 0 1 1 3.75 0.6"/>
  <path d="M1.3 0.2L6.2 0.2L3.75 3.5Z" fill="#686868" stroke="none"/>
 </g>
 <!-- scale -->
 <g transform="translate(504.5 36.5)" stroke="#686868" fill="#686868">
  <path d="M-3.6 3.6L3.6 -3.6" stroke-width="2.1"/>
  <path d="M0.8 -5.6H5.6V-0.8Z M-0.8 5.6H-5.6V0.8Z" stroke="none"/>
 </g>
 <!-- move -->
 <g transform="translate(526.7 36.5)" stroke="#686868" fill="#686868">
  <path d="M-4 0H4M0 -4V4" stroke-width="1.5"/>
  <path d="M-5.7 0L-3 -2.5V2.5ZM5.7 0L3 -2.5V2.5ZM0 -5.7L-2.5 -3H2.5ZM0 5.7L-2.5 3H2.5Z" stroke="none"/>
 </g>
 <!-- layers -->
 <g fill="#686868">
  <path d="M544 33.8H545.6V40.6H552.4V42.2H544Z"/>
  <rect x="547" y="31" width="8.2" height="8.2"/>
  <rect x="549.6" y="32.6" width="4" height="1.5" fill="#8a8a8a"/>
 </g>
 <!-- layout -->
 <g fill="none" stroke="#686868">
  <rect x="567.3" y="32" width="9.4" height="9" stroke-width="1.3"/>
  <path d="M567.3 33.2H576.7" stroke-width="2.4"/>
  <path d="M572 34V41" stroke-width="1.3"/>
 </g>

 <!-- status bar -->
 <rect x="252.6" y="389.2" width="194.9" height="20.4" fill="#eaeaea"/>
 <path d="M252.6 409.6V391.8A3 3 0 0 1 255.6 388.8H278.6V409.6Z" fill="#f1f1f1" stroke="#f8f8f8" stroke-width=".6"/>
 <g fill="none" stroke="#6b6b6b" stroke-width="1.25"><circle cx="265" cy="398.3" r="4.4"/><path d="M265 395.6V398.6H267.6" stroke-width="1"/></g>
 <text x="286.5" y="399.9" font-family="Liberation Sans, sans-serif" font-size="5.3" fill="#24434d" stroke="#24434d" stroke-width=".12" textLength="46.2" lengthAdjust="spacingAndGlyphs">Job Volume: 32.5 ml</text>
 <text x="341.2" y="399.9" font-family="Liberation Sans, sans-serif" font-size="5.3" fill="#24434d" stroke="#24434d" stroke-width=".12" textLength="100.6" lengthAdjust="spacingAndGlyphs">Model Bounding Box Size : 56 x 56 x 71 (mm)</text>
 <!-- cursor -->
 <path d="M272.4 398.4V407.8L274.6 405.8L276.1 409.2L277.7 408.5L276.2 405.2L279.1 405Z" fill="#00323a" stroke="#f4f4f4" stroke-width=".6"/>
 <!-- butterfly -->
 <g fill="none" stroke="#858a8c" stroke-width=".95" stroke-linejoin="round">
  <path d="M657.3 393.2L651 388.4L653 393.8L652.4 394.6L655 397.6L657.3 393.2L660 397.8L662 394.8L661.4 394L664.4 388.6Z"/>
  <path d="M657.3 393.2L653 393.8M657.3 393.2L661.4 394M657.3 393.2L657 389.5M657.3 393.2L658.2 389.5"/>
 </g>
</g>
</svg>
</body></html>
